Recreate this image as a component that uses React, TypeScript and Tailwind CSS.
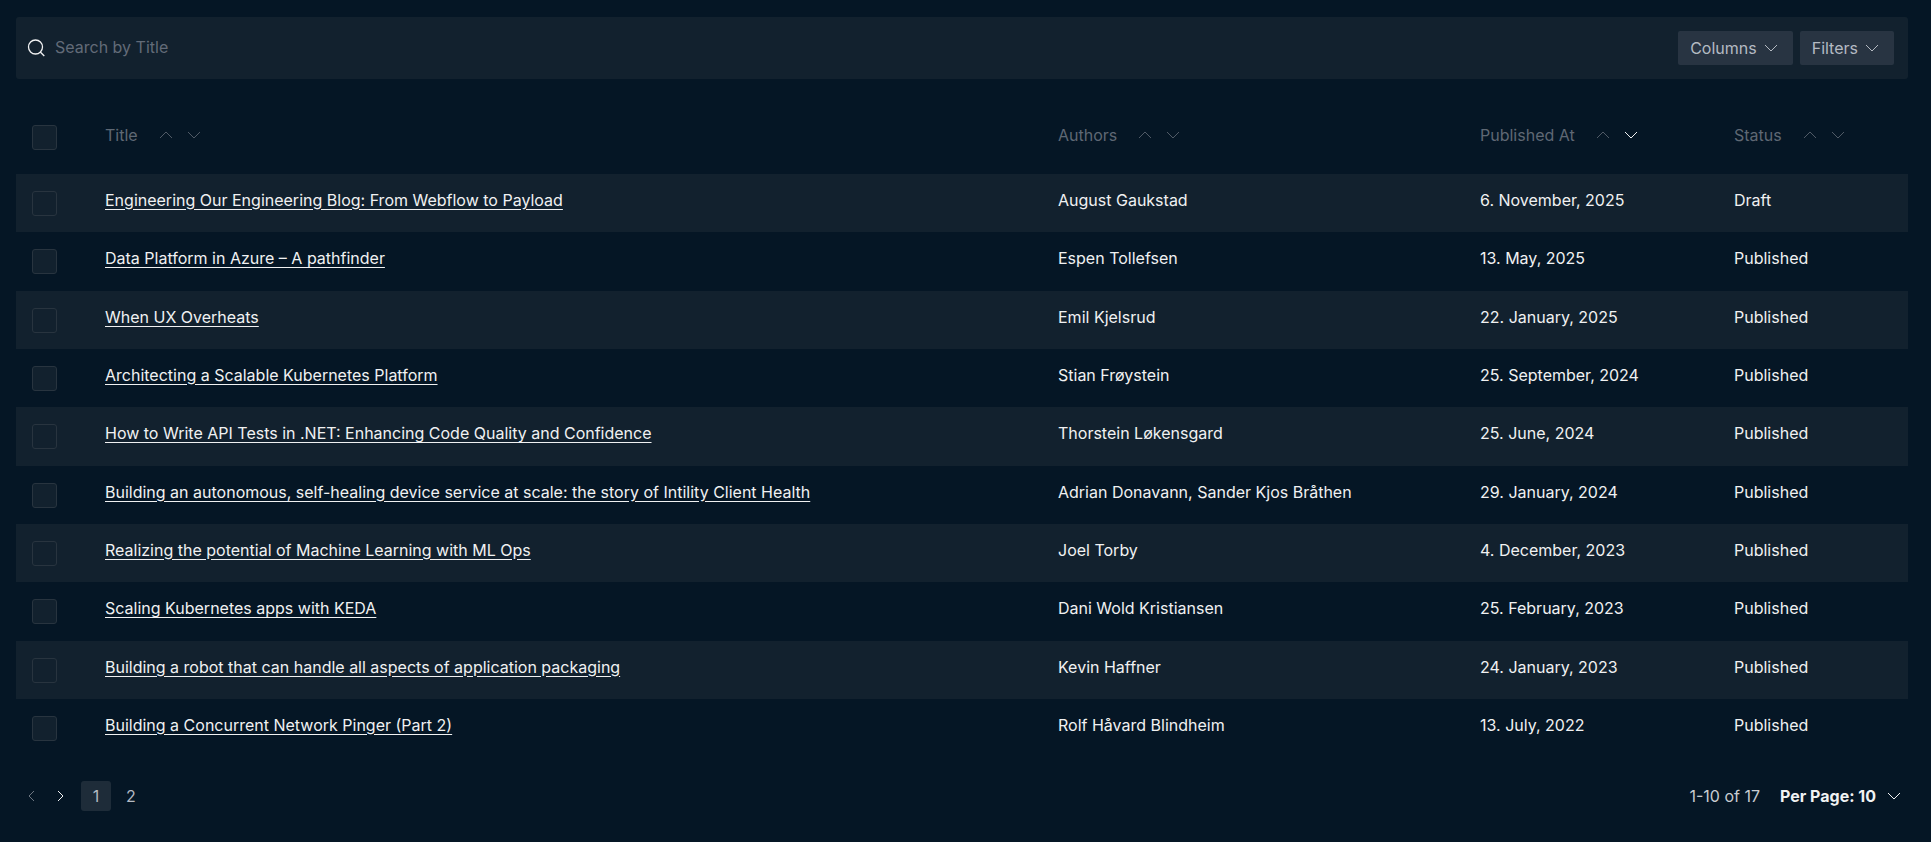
import React, { useState } from 'react';

interface Post {
  title: string;
  authors: string;
  publishedAt: string;
  status: string;
}

const posts: Post[] = [
  { title: 'Engineering Our Engineering Blog: From Webflow to Payload', authors: 'August Gaukstad', publishedAt: '6. November, 2025', status: 'Draft' },
  { title: 'Data Platform in Azure – A pathfinder', authors: 'Espen Tollefsen', publishedAt: '13. May, 2025', status: 'Published' },
  { title: 'When UX Overheats', authors: 'Emil Kjelsrud', publishedAt: '22. January, 2025', status: 'Published' },
  { title: 'Architecting a Scalable Kubernetes Platform', authors: 'Stian Frøystein', publishedAt: '25. September, 2024', status: 'Published' },
  { title: 'How to Write API Tests in .NET: Enhancing Code Quality and Confidence', authors: 'Thorstein Løkensgard', publishedAt: '25. June, 2024', status: 'Published' },
  { title: 'Building an autonomous, self-healing device service at scale: the story of Intility Client Health', authors: 'Adrian Donavann, Sander Kjos Bråthen', publishedAt: '29. January, 2024', status: 'Published' },
  { title: 'Realizing the potential of Machine Learning with ML Ops', authors: 'Joel Torby', publishedAt: '4. December, 2023', status: 'Published' },
  { title: 'Scaling Kubernetes apps with KEDA', authors: 'Dani Wold Kristiansen', publishedAt: '25. February, 2023', status: 'Published' },
  { title: 'Building a robot that can handle all aspects of application packaging', authors: 'Kevin Haffner', publishedAt: '24. January, 2023', status: 'Published' },
  { title: 'Building a Concurrent Network Pinger (Part 2)', authors: 'Rolf Håvard Blindheim', publishedAt: '13. July, 2022', status: 'Published' }
];

// Title takes whatever is left over
const columns = [
  { label: 'Title', width: '' },
  { label: 'Authors', width: 'w-[422px]' },
  { label: 'Published At', width: 'w-[254px]' },
  { label: 'Status', width: 'w-[174px]' }
];

const chevronPaths = {
  up: 'M4 13l6-6 6 6',
  down: 'M4 7l6 6 6-6',
  left: 'M13 5l-5 5 5 5',
  right: 'M7 5l5 5-5 5'
};

const Chevron: React.FC<{ direction: keyof typeof chevronPaths; className?: string }> = ({ direction, className = '' }) => (
  <svg className={`w-5 h-5 shrink-0 ${className}`} fill="none" stroke="currentColor" viewBox="0 0 20 20" aria-hidden="true">
    <path strokeWidth={1} d={chevronPaths[direction]} />
  </svg>
);

const Checkbox: React.FC<{ label: string; checked: boolean; onChange: () => void }> = ({ label, checked, onChange }) => (
  <input
    type="checkbox"
    aria-label={label}
    checked={checked}
    onChange={onChange}
    className="block appearance-none w-[25px] h-[25px] rounded-[3px] border border-[#28343f] bg-[#12212e] checked:bg-[#8b95a0]"
  />
);

const App: React.FC = () => {
  const [search, setSearch] = useState('');
  const [selected, setSelected] = useState<string[]>([]);
  const [sort, setSort] = useState({ column: 'Published At', direction: 'down' });

  const visible = posts.filter(post => post.title.toLowerCase().includes(search.toLowerCase()));
  const allSelected = selected.length === posts.length;

  const toggle = (title: string) => {
    setSelected(prev => (prev.includes(title) ? prev.filter(t => t !== title) : [...prev, title]));
  };

  return (
    <div className="min-h-screen bg-[#051625] pt-[17px] pb-6 pl-4 pr-[23px] font-['Inter',sans-serif] text-base leading-6 text-[#f0f1f2]">
      {/* Search bar */}
      <div className="flex items-center h-[62px] pl-[11px] pr-[14px] rounded-[3px] bg-[#12212e]">
        <svg className="w-[18px] h-[18px] shrink-0" fill="none" stroke="currentColor" viewBox="0 0 18 18" aria-hidden="true">
          <circle cx="8.5" cy="8" r="7" strokeWidth={1.3} />
          <path strokeWidth={1.3} d="M13.3 13l4 4" />
        </svg>
        <input
          type="text"
          aria-label="Search by Title"
          placeholder="Search by Title"
          value={search}
          onChange={e => setSearch(e.target.value)}
          className="flex-1 min-w-0 ml-[10px] h-8 pb-0.5 bg-transparent outline-none placeholder-[#626b78]"
        />
        <div className="flex gap-[7px] text-[#b4bac2]">
          <button type="button" className="flex items-center h-[34px] px-3 pb-px gap-1 rounded-[2px] bg-[#283442]">
            Columns
            <Chevron direction="down" />
          </button>
          <button type="button" className="flex items-center h-[34px] px-3 pb-px gap-1 rounded-[2px] bg-[#283442]">
            Filters
            <Chevron direction="down" />
          </button>
        </div>
      </div>

      {/* Posts */}
      <table className="w-full mt-[17px] table-fixed border-collapse text-left">
        <thead>
          <tr className="h-[78px] text-[#5f6874]">
            <th className="w-[89px] pl-4 pt-1 font-normal">
              <Checkbox
                label="Select all"
                checked={allSelected}
                onChange={() => setSelected(allSelected ? [] : posts.map(p => p.title))}
              />
            </th>
            {columns.map(({ label, width }) => (
              <th key={label} className={`font-normal ${width}`}>
                <div className="flex items-center">
                  <span className="mr-[18px]">{label}</span>
                  {(['up', 'down'] as const).map(direction => (
                    <button
                      key={direction}
                      type="button"
                      aria-label={`Sort by ${label} ${direction === 'up' ? 'ascending' : 'descending'}`}
                      onClick={() => setSort({ column: label, direction })}
                      className="mr-2"
                    >
                      <Chevron
                        direction={direction}
                        className={sort.column === label && sort.direction === direction ? 'text-[#f0f1f2]' : 'text-[#505a66]'}
                      />
                    </button>
                  ))}
                </div>
              </th>
            ))}
          </tr>
        </thead>
        <tbody>
          {visible.map(post => (
            <tr key={post.title} className="h-[58px] nth-[3n+2]:h-[59px] odd:bg-[#12212e]">
              <td className="pl-4">
                <Checkbox label={`Select ${post.title}`} checked={selected.includes(post.title)} onChange={() => toggle(post.title)} />
              </td>
              <td className="pb-[7px]">
                <a href="#" className="underline underline-offset-3">{post.title}</a>
              </td>
              <td className="pb-[7px]">{post.authors}</td>
              <td className="pb-[7px]">{post.publishedAt}</td>
              <td className="pb-[7px]">{post.status}</td>
            </tr>
          ))}
        </tbody>
      </table>

      {/* Pagination */}
      <div className="flex items-center justify-between mt-6">
        <nav aria-label="Pagination" className="flex items-center text-[#b4bac2]">
          <button type="button" aria-label="Previous page" disabled className="flex items-center justify-center w-[30px] h-[30px] text-[#6d7681]">
            <Chevron direction="left" />
          </button>
          <button type="button" aria-label="Next page" className="flex items-center justify-center w-[30px] h-[30px] text-[#f0f1f2]">
            <Chevron direction="right" />
          </button>
          <button type="button" aria-current="page" className="w-[30px] h-[30px] ml-[5px] rounded-[3px] bg-[#1e2c39]">1</button>
          <button type="button" className="w-[30px] h-[30px] ml-[5px]">2</button>
        </nav>
        <div className="flex items-center gap-5">
          <span className="text-[#c8ccd1]">1-10 of 17</span>
          <button type="button" className="flex items-center gap-2 pr-1 font-bold">
            Per Page: 10
            <Chevron direction="down" />
          </button>
        </div>
      </div>
    </div>
  );
};

export default App;
